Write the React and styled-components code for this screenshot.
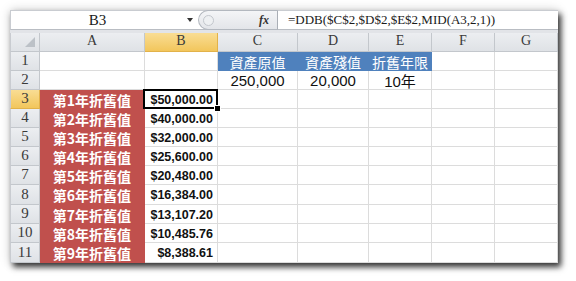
import React from "react";
import styled, { createGlobalStyle } from "styled-components";

const GlobalStyle = createGlobalStyle`
  html, body {
    margin: 0;
    background: #ffffff;
  }
  body {
    width: 576px;
    height: 281px;
    overflow: hidden;
  }
`;

const Page = styled.div`
  padding: 10px 0 0 10px;
`;

const Sheet = styled.div`
  width: 548px;
  height: 253px;
  background: #ffffff;
  display: flex;
  flex-direction: column;
  box-shadow: 3px 4px 6px rgba(0, 0, 0, 0.78), 0 0 10px rgba(0, 0, 0, 0.18);
  overflow: hidden;
`;

const FormulaBar = styled.div`
  display: flex;
  height: 20px;
  box-sizing: border-box;
  border-top: 1px solid #c9ccd1;
  border-left: 1px solid #c9ccd1;
  border-bottom: 1px solid #b9bdc3;
  font-family: "Liberation Serif", "Noto Sans CJK TC", serif;
  color: #1a1a1a;
`;

const NameBox = styled.div`
  width: 173px;
  display: flex;
  align-items: center;
  justify-content: center;
  font-size: 15px;
`;

const DropArrow = styled.div`
  width: 12px;
  display: flex;
  align-items: center;
  justify-content: center;
  &::after {
    content: "";
    border-left: 3px solid transparent;
    border-right: 3px solid transparent;
    border-top: 4px solid #333;
  }
`;

const FxPill = styled.div`
  width: 80px;
  box-sizing: border-box;
  margin-left: 2px;
  display: flex;
  align-items: center;
  justify-content: space-between;
  padding: 0 8px 0 4px;
  background: linear-gradient(#f4f5f7, #e3e5e9);
  border: 1px solid #b3b8bf;
  border-right: 1px solid #a9aeb5;
  border-radius: 10px 0 0 10px;
  margin-top: -1px;
  margin-bottom: -1px;
`;

const Knob = styled.span`
  width: 9px;
  height: 9px;
  border-radius: 50%;
  border: 1px solid #c3c7cd;
  background: #eef0f2;
`;

const Fx = styled.span`
  font-family: "Liberation Serif", serif;
  font-style: italic;
  font-weight: 700;
  font-size: 12px;
  color: #333;
`;

const FormulaText = styled.div`
  flex: 1;
  display: flex;
  align-items: center;
  padding-left: 10px;
  font-size: 13px;
  white-space: nowrap;
`;

const Band = styled.div`
  height: 3px;
  background: #e2e4e8;
`;

const Grid = styled.div`
  display: grid;
  grid-template-columns: 30px 105px 73px 80px 71px 63px 63px 63px;
  grid-template-rows: 19px 19px 19px 19px 19px 19px 19px 19px 20px 19px 19px 20px;
`;

const HeaderBase = styled.div`
  box-sizing: border-box;
  display: flex;
  align-items: flex-end;
  justify-content: center;
  padding-bottom: 2px;
  font-family: "Liberation Serif", serif;
  font-size: 14px;
  color: #3a3a3a;
  border-right: 1px solid #c3c7cc;
  border-bottom: 1px solid #c3c7cc;
  background: ${(p) =>
    p.$active
      ? "linear-gradient(#f9dd94, #f2c65c)"
      : "linear-gradient(#eceef1, #dfe2e6)"};
  ${(p) => p.$active && "border-color: #e2b24a;"}
`;

const Corner = styled(HeaderBase)`
  position: relative;
  border-left: 1px solid #c9ccd1;
  &::after {
    content: "";
    position: absolute;
    right: 4px;
    bottom: 4px;
    border-left: 10px solid transparent;
    border-bottom: 10px solid #bcc1c7;
  }
`;

const ColHeader = styled(HeaderBase)``;

const RowHeader = styled(HeaderBase)`
  border-left: 1px solid #c9ccd1;
  font-size: 15px;
  padding-bottom: 1px;
`;

const fills = {
  red: "#c0504d",
  blue: "#4f81bd",
};

const Cell = styled.div`
  position: relative;
  box-sizing: border-box;
  display: flex;
  align-items: center;
  justify-content: ${(p) => (p.$right ? "flex-end" : "center")};
  padding: ${(p) => (p.$right ? "1px 4px 0 0" : "1px 0 0")};
  border-right: 1px solid ${(p) => fills[p.$fill] || "#dcdcdc"};
  border-bottom: 1px solid ${(p) => fills[p.$fill] || "#dcdcdc"};
  background: ${(p) => fills[p.$fill] || "#ffffff"};
  color: ${(p) => (p.$fill ? "#ffffff" : "#111111")};
  font-family: ${(p) =>
    p.$cjk
      ? '"Noto Sans CJK TC", sans-serif'
      : '"Liberation Sans", "Noto Sans CJK TC", sans-serif'};
  font-size: ${(p) => p.$size || 14}px;
  font-weight: ${(p) => (p.$bold ? 700 : 400)};
  white-space: nowrap;

  ${(p) =>
    p.$selected &&
    `
    &::after {
      content: "";
      position: absolute;
      left: -2px;
      top: -1px;
      right: -1px;
      bottom: -1px;
      border: 2px solid #000;
    }
    &::before {
      content: "";
      position: absolute;
      right: -4px;
      bottom: -4px;
      width: 5px;
      height: 5px;
      background: #000;
      border: 1px solid #fff;
      z-index: 2;
    }
  `}
`;

const columns = ["A", "B", "C", "D", "E", "F", "G"];

const depreciation = [
  "$50,000.00",
  "$40,000.00",
  "$32,000.00",
  "$25,600.00",
  "$20,480.00",
  "$16,384.00",
  "$13,107.20",
  "$10,485.76",
  "$8,388.61",
];

function cellFor(row, col) {
  if (row === 1 && col >= 2 && col <= 4) {
    const labels = ["資產原值", "資產殘值", "折舊年限"];
    return { text: labels[col - 2], fill: "blue", cjk: true, size: 14 };
  }
  if (row === 2 && col >= 2 && col <= 4) {
    const values = ["250,000", "20,000", "10年"];
    return { text: values[col - 2], size: 15 };
  }
  if (row >= 3 && col === 0) {
    return { text: `第${row - 2}年折舊值`, fill: "red", cjk: true, bold: true, size: 14 };
  }
  if (row >= 3 && col === 1) {
    return { text: depreciation[row - 3], bold: true, right: true, size: 12.5, selected: row === 3 };
  }
  return { text: "" };
}

export default function App() {
  const rows = Array.from({ length: 11 }, (_, i) => i + 1);
  return (
    <Page>
      <GlobalStyle />
      <Sheet>
        <FormulaBar>
          <NameBox>B3</NameBox>
          <DropArrow />
          <FxPill>
            <Knob />
            <Fx>fx</Fx>
          </FxPill>
          <FormulaText>=DDB($C$2,$D$2,$E$2,MID(A3,2,1))</FormulaText>
        </FormulaBar>
        <Band />
        <Grid>
          <Corner />
          {columns.map((c) => (
            <ColHeader key={c} $active={c === "B"}>
              {c}
            </ColHeader>
          ))}
          {rows.map((r) => (
            <React.Fragment key={r}>
              <RowHeader $active={r === 3}>{r}</RowHeader>
              {columns.map((c, ci) => {
                const cell = cellFor(r, ci);
                return (
                  <Cell
                    key={c}
                    $fill={cell.fill}
                    $cjk={cell.cjk}
                    $bold={cell.bold}
                    $right={cell.right}
                    $size={cell.size}
                    $selected={cell.selected}
                  >
                    {cell.text}
                  </Cell>
                );
              })}
            </React.Fragment>
          ))}
        </Grid>
      </Sheet>
    </Page>
  );
}
